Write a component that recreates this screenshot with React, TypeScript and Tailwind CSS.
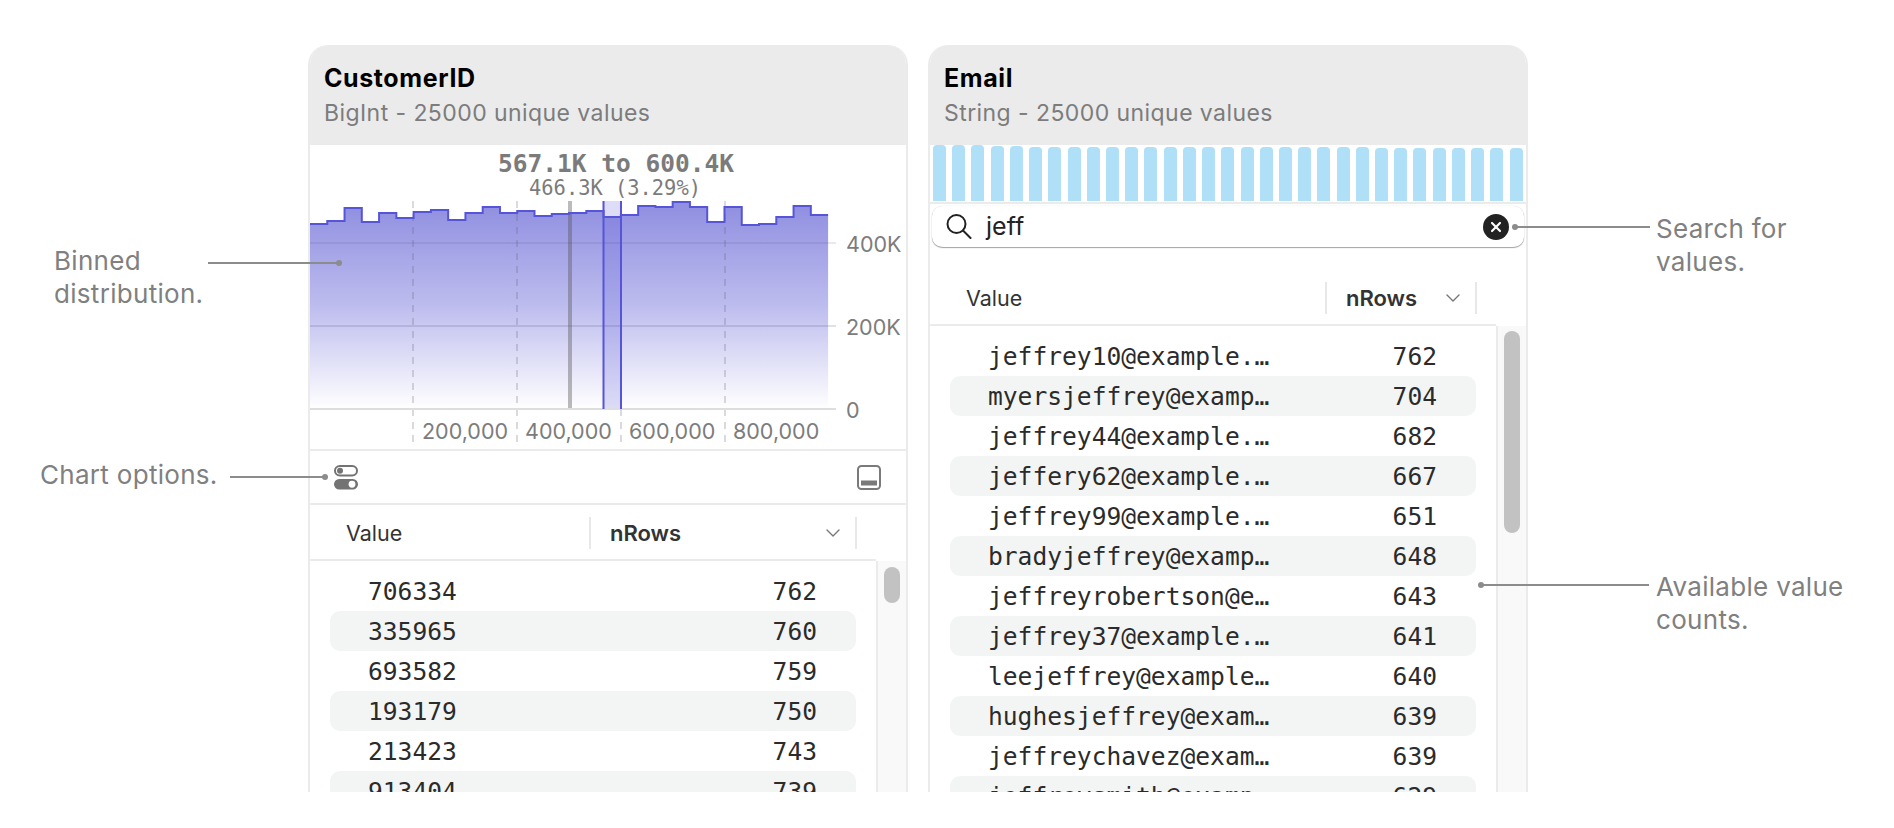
import { ChevronDown, X } from 'lucide-react'

const MONO = "font-['DejaVu_Sans_Mono',monospace]"

// top edge of each bin, in chart pixels
const bins = [
  79, 76, 63, 77, 68, 73, 67, 65, 75, 68, 62, 68, 66, 71, 69, 68, 66, 72, 70, 61, 62, 57, 62, 77, 62, 80, 79, 72, 61, 70,
]
const BIN_W = 17.27
const PLOT_BOTTOM = 264

function histogramPath(close: boolean) {
  let d = `M0 ${bins[0]}`
  bins.forEach((top, i) => {
    d += ` L${i * BIN_W} ${top} L${(i + 1) * BIN_W} ${top}`
  })
  if (close) d += ` L${30 * BIN_W} ${PLOT_BOTTOM} L0 ${PLOT_BOTTOM} Z`
  return d
}

function Distribution() {
  const axisText = 'fill-[#7c7c7c] text-[21.5px]'
  return (
    <svg width="596" height="304" viewBox="0 0 596 304" className="block shrink-0">
      <defs>
        <linearGradient id="binFill" x1="0" y1="0" x2="0" y2="1">
          <stop offset="0" stopColor="#8f8ee0" />
          <stop offset="0.5" stopColor="#bdbcee" />
          <stop offset="1" stopColor="#ffffff" />
        </linearGradient>
      </defs>

      <text x="306" y="18" textAnchor="middle" dominantBaseline="central" className={`${MONO} fill-[#7b7b7b] text-[24.5px] font-bold`}>
        567.1K to 600.4K
      </text>
      <text x="305" y="43" textAnchor="middle" dominantBaseline="central" className={`${MONO} fill-[#7b7b7b] text-[20.4px]`}>
        466.3K (3.29%)
      </text>

      <path d={histogramPath(true)} fill="url(#binFill)" />

      {[103, 207, 311, 415].map((x) => (
        <line key={x} x1={x} x2={x} y1="56" y2="300" stroke="#5c5c70" strokeOpacity="0.3" strokeWidth="1.5" strokeDasharray="7 6" />
      ))}

      <rect x="293.5" y="56" width="17.3" height="208" fill="#5655d7" fillOpacity="0.2" />
      <rect x="258" y="56" width="4" height="208" fill="#555" fillOpacity="0.4" />

      <line x1="0" x2="526" y1="98" y2="98" stroke="#4b4b80" strokeOpacity="0.25" strokeWidth="1" />
      <line x1="0" x2="526" y1="181" y2="181" stroke="#4b4b80" strokeOpacity="0.35" strokeWidth="1" />
      <line x1="0" x2="526" y1="264" y2="264" stroke="#dedede" strokeWidth="2" />

      <path d={histogramPath(false)} fill="none" stroke="#5655d7" strokeWidth="2" />
      <line x1="293.5" x2="293.5" y1="56" y2="264" stroke="#5655d7" strokeWidth="2" />
      <line x1="311" x2="311" y1="56" y2="264" stroke="#5655d7" strokeWidth="2" />

      <text x="536" y="99" dominantBaseline="central" className={axisText}>400K</text>
      <text x="536" y="182" dominantBaseline="central" className={axisText}>200K</text>
      <text x="536" y="265" dominantBaseline="central" className={axisText}>0</text>
      <text x="112" y="286" dominantBaseline="central" className={axisText}>200,000</text>
      <text x="215" y="286" dominantBaseline="central" className={axisText}>400,000</text>
      <text x="319" y="286" dominantBaseline="central" className={axisText}>600,000</text>
      <text x="423" y="286" dominantBaseline="central" className={axisText}>800,000</text>
    </svg>
  )
}

function ToggleIcon() {
  return (
    <svg width="24" height="25" viewBox="0 0 24 25">
      <rect x="1" y="1" width="22" height="9.5" rx="4.75" fill="none" stroke="#737373" strokeWidth="2" />
      <circle cx="6" cy="5.75" r="3" fill="#737373" />
      <rect x="0" y="14" width="24" height="10.5" rx="5.25" fill="#737373" />
      <circle cx="18" cy="19.25" r="3.4" fill="#fff" />
    </svg>
  )
}

function PanelIcon() {
  return (
    <svg width="24" height="25" viewBox="0 0 24 25">
      <rect x="1" y="1" width="22" height="23" rx="3.5" fill="none" stroke="#7a7a7a" strokeWidth="2" />
      <rect x="4" y="15.5" width="16" height="5" fill="#7a7a7a" />
    </svg>
  )
}

function SearchIcon() {
  return (
    <svg width="26" height="25" viewBox="0 0 26 25" fill="none" stroke="#222" strokeWidth="2" strokeLinecap="round">
      <circle cx="10.5" cy="10" r="9" />
      <path d="M17 16.5 24.5 24" />
    </svg>
  )
}

type Row = [string, number]

function Table({ rows, firstCol, secondCol, thumb, scrollPad }: { rows: Row[]; firstCol: string; secondCol: string; thumb: string; scrollPad: string }) {
  return (
    <div className="flex min-h-0 flex-1 flex-col">
      <div className="flex h-[56px] w-[566px] shrink-0 items-center border-b-2 border-[#ebebeb] pt-[2px] text-[#333]">
        <div className={`${firstCol} pl-[36px] text-[21.5px]`}>Value</div>
        <div className="h-[32px] w-[2px] bg-[#e8e8e8]" />
        <div className={`${secondCol} flex items-center justify-between pl-[19px] pr-[10px]`}>
          <span className="text-[22px] font-semibold">nRows</span>
          <ChevronDown size={24} strokeWidth={1.4} className="text-[#777]" />
        </div>
        <div className="h-[32px] w-[2px] bg-[#e8e8e8]" />
      </div>
      <div className="flex min-h-0 flex-1">
        <div className="w-[566px] shrink-0 px-[20px] pt-[10px]">
          {rows.map(([value, count], i) => (
            <div
              key={value}
              className={`flex h-[40px] items-center justify-between rounded-[10px] pl-[38px] pr-[39px] pt-[2px] text-[24.6px] text-[#2b2b2b] ${MONO} ${i % 2 === 1 ? 'bg-[#f3f5f4]' : ''}`}
            >
              <span className="w-[284px] truncate">{value}</span>
              <span>{count}</span>
            </div>
          ))}
        </div>
        <div className={`flex-1 border-l-2 border-[#ebebeb] bg-[#f9f9f9] pl-[6px] ${scrollPad}`}>
          <div className={`w-[16px] rounded-full bg-[#c2c2c2] ${thumb}`} />
        </div>
      </div>
    </div>
  )
}

function CardHeader({ title, subtitle }: { title: string; subtitle: string }) {
  return (
    <div className="h-[100px] shrink-0 bg-[#ebebeb] pl-[14px] pt-[17px]">
      <div className="text-[25px] leading-[32px] font-bold tracking-[0.6px] text-black">{title}</div>
      <div className="mt-[3px] text-[23px] leading-[32px] tracking-[0.43px] text-[#7c7c7c]">{subtitle}</div>
    </div>
  )
}

const customerRows: Row[] = [
  ['706334', 762],
  ['335965', 760],
  ['693582', 759],
  ['193179', 750],
  ['213423', 743],
  ['913404', 739],
]

const emailRows: Row[] = [
  ['jeffrey10@example.com', 762],
  ['myersjeffrey@example.com', 704],
  ['jeffrey44@example.com', 682],
  ['jeffery62@example.com', 667],
  ['jeffrey99@example.com', 651],
  ['bradyjeffrey@example.com', 648],
  ['jeffreyrobertson@example.com', 643],
  ['jeffrey37@example.com', 641],
  ['leejeffrey@example.com', 640],
  ['hughesjeffrey@example.com', 639],
  ['jeffreychavez@example.com', 639],
  ['jeffreysmith@example.com', 629],
]

const emailBars = [
  56, 56, 56, 55, 55, 54, 54, 54, 54, 54, 54, 54, 54, 54, 54, 54, 54, 54, 54, 54, 54, 54, 54, 53, 53, 53, 53, 53, 53, 53, 53,
]

function Leader({ line, dot }: { line: string; dot: string }) {
  return (
    <>
      <div className={`absolute h-[2px] bg-[#8c8c8c] ${line}`} />
      <div className={`absolute h-[6px] w-[6px] rounded-full bg-[#8c8c8c] ${dot}`} />
    </>
  )
}

function Note({ className, children }: { className: string; children: React.ReactNode }) {
  return <div className={`absolute text-[26px] leading-[33px] tracking-[0.3px] text-[#808080] ${className}`}>{children}</div>
}

export default function App() {
  return (
    <div className="relative h-[828px] w-[1894px] overflow-hidden bg-white font-['Inter',sans-serif] [font-optical-sizing:none]">
      <div className="flex h-[792px] gap-[20px] pl-[308px] pt-[45px]">
        {/* CustomerID */}
        <div className="flex w-[600px] flex-col overflow-hidden rounded-t-[20px] border-x-2 border-[#ebebeb]">
          <CardHeader title="CustomerID" subtitle="BigInt - 25000 unique values" />
          <Distribution />
          <div className="flex h-[56px] shrink-0 items-center justify-between border-y-2 border-[#ebebeb] pl-[24px] pr-[25px]">
            <ToggleIcon />
            <PanelIcon />
          </div>
          <Table rows={customerRows} firstCol="w-[279px]" secondCol="w-[264px]" thumb="h-[36px]" scrollPad="pt-[6px]" />
        </div>

        {/* Email */}
        <div className="flex w-[600px] flex-col overflow-hidden rounded-t-[20px] border-x-2 border-[#ebebeb]">
          <CardHeader title="Email" subtitle="String - 25000 unique values" />
          <div className="h-[59px] shrink-0 border-b-2 border-[#ebebeb] pl-[3px] pr-[3px]">
            <div className="flex h-[56px] items-end justify-between">
              {emailBars.map((h, i) => (
                <div key={i} className="w-[13px] rounded-t-[4px] bg-[#b0dff8]" style={{ height: h }} />
              ))}
            </div>
          </div>
          <div className="mx-[2px] mt-[2px] flex h-[41px] shrink-0 items-center rounded-[10px] pl-[14px] pr-[15px] shadow-[0_1px_1px_rgba(0,0,0,0.35),0_0_1px_rgba(0,0,0,0.2)]">
            <SearchIcon />
            <span className="ml-[14px] flex-1 text-[25px] text-[#222]">jeff</span>
            <div className="flex h-[26px] w-[26px] items-center justify-center rounded-full bg-[#222]">
              <X size={16} strokeWidth={3.2} className="text-white" />
            </div>
          </div>
          <div className="h-[23px] shrink-0" />
          <Table rows={emailRows} firstCol="w-[395px]" secondCol="w-[148px]" thumb="h-[202px]" scrollPad="pt-[5px]" />
        </div>
      </div>

      <Note className="left-[54px] top-[244px]">
        Binned
        <br />
        distribution.
      </Note>
      <Leader line="left-[208px] top-[262px] w-[131px]" dot="left-[336px] top-[260px]" />

      <Note className="left-[40px] top-[458px]">Chart options.</Note>
      <Leader line="left-[230px] top-[476px] w-[95px]" dot="left-[322px] top-[474px]" />

      <Note className="left-[1656px] top-[212px]">
        Search for
        <br />
        values.
      </Note>
      <Leader line="left-[1515px] top-[226px] w-[135px]" dot="left-[1512px] top-[224px]" />

      <Note className="left-[1656px] top-[570px]">
        Available value
        <br />
        counts.
      </Note>
      <Leader line="left-[1481px] top-[584px] w-[168px]" dot="left-[1478px] top-[582px]" />
    </div>
  )
}
